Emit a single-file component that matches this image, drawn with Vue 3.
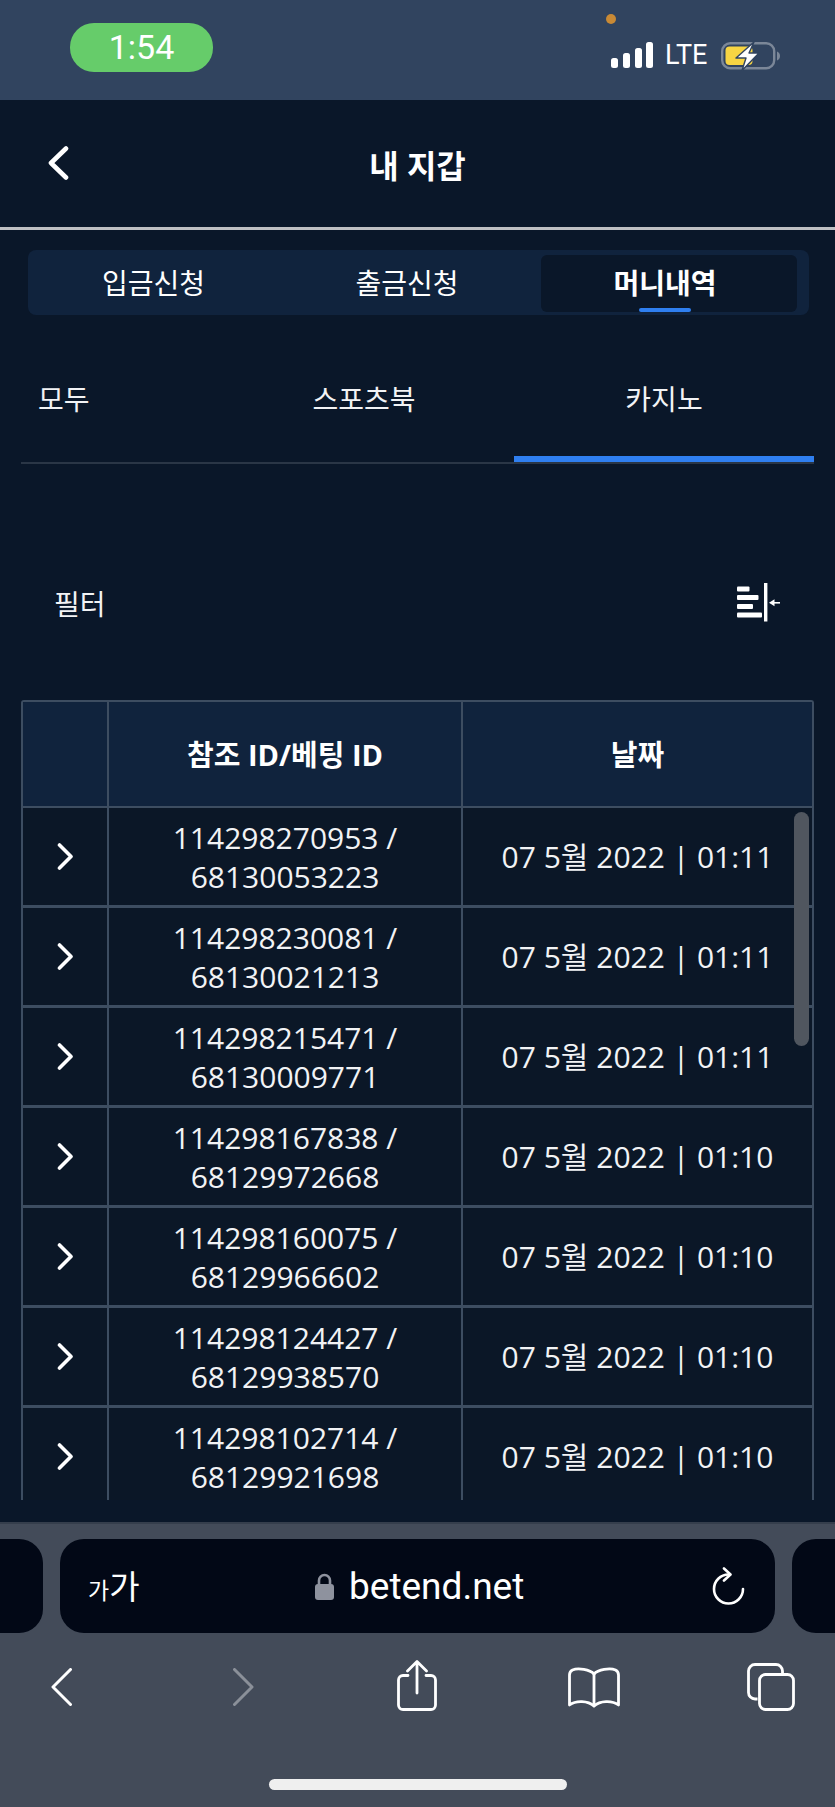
<template>
  <div class="phone">
    <!-- status bar -->
    <div class="status">
      <div class="time">1:54</div>
      <span class="cam-dot"></span>
      <div class="status-right">
        <svg class="signal" width="42" height="26" viewBox="0 0 42 26">
          <rect x="0" y="16" width="7" height="10" rx="2.5" />
          <rect x="12" y="11" width="7" height="15" rx="2.5" />
          <rect x="24" y="6" width="7" height="20" rx="2.5" />
          <rect x="35" y="0" width="7" height="26" rx="2.5" />
        </svg>
        <span class="lte">LTE</span>
        <svg class="battery" width="60" height="29" viewBox="0 0 60 29">
          <rect x="1.2" y="1.2" width="52" height="25" rx="8" fill="none" stroke="#7b8798" stroke-width="2.4" />
          <path d="M56 9.5c2 .6 3 2.3 3 4.5s-1 3.900-3 4.500z" fill="#7b8798" />
          <rect x="4.500" y="4.500" width="27" height="18.500" rx="4" fill="#f8d543" />
          <path d="M33 0 L15 16 H25 L21 28.500 L38 11 H28 Z" fill="#fff" stroke="#31445f" stroke-width="1.400" stroke-linejoin="round" />
        </svg>
      </div>
    </div>

    <!-- header -->
    <header class="head">
      <svg class="head-back" width="22" height="34" viewBox="0 0 22 34">
        <path d="M19 2.500 L4 17 L19 31.500" fill="none" stroke="#fff" stroke-width="4.600" stroke-linecap="round" stroke-linejoin="round" />
      </svg>
      <h1>내 지갑</h1>
    </header>

    <div class="main-tabs">
      <div v-for="t in mainTabs" :key="t.label" class="main-tab" :class="[t.cls, { active: t.active }]">
        {{ t.label }}
      </div>
    </div>

    <div class="sub-tabs">
      <div class="sub-tab first">모두</div>
      <div class="sub-tab">스포츠북</div>
      <div class="sub-tab active">카지노</div>
    </div>

    <div class="filter">
      <span>필터</span>
      <svg width="43" height="39" viewBox="0 0 43 39" fill="#fff">
        <rect x="0" y="3.500" width="12.500" height="5" rx="1" />
        <rect x="0" y="12" width="21.500" height="5" rx="1" />
        <rect x="0" y="21" width="16" height="5" rx="1" />
        <rect x="0" y="29.500" width="25" height="5" rx="1" />
        <rect x="27" y="0" width="3.400" height="38.500" />
        <rect x="36" y="19" width="7" height="1.600" />
        <path d="M32 19.800 L37.500 16.300 V23.300 Z" />
      </svg>
    </div>

    <!-- table -->
    <div class="table-wrap">
      <div class="row head-row">
        <div class="cell"></div>
        <div class="cell">참조 ID/베팅 ID</div>
        <div class="cell">날짜</div>
      </div>
      <div v-for="r in rows" :key="r.ref" class="row">
        <div class="cell">
          <svg width="17" height="27" viewBox="0 0 17 27">
            <path d="M2.500 2 L14 13.500 L2.500 25" fill="none" stroke="#fff" stroke-width="3.600" stroke-linecap="round" stroke-linejoin="round" />
          </svg>
        </div>
        <div class="cell">{{ r.ref }} /<br />{{ r.bet }}</div>
        <div class="cell">07 5월 2022 | {{ r.time }}</div>
      </div>
      <div class="scrollbar"></div>
    </div>

    <!-- safari toolbar -->
    <div class="browser">
      <div class="url-row">
        <div class="stub left"></div>
        <div class="url">
          <span class="aa"><small>가</small>가</span>
          <svg class="lock" width="19" height="27" viewBox="0 0 19 27">
            <path d="M4 13V7.500a5.500 5.500 0 0 1 11 0V13" fill="none" stroke="#8e929e" stroke-width="2.600" />
            <rect x="0" y="11" width="19" height="16" rx="3" fill="#8e929e" />
          </svg>
          <span class="host">betend.net</span>
          <svg class="reload" width="33" height="38" viewBox="0 0 33 38">
            <path d="M16.500 7.500 A14.500 14.500 0 1 0 31 22" fill="none" stroke="#fff" stroke-width="2.600" stroke-linecap="round" />
            <path d="M12 1.500 L18.500 7.500 L12 13.500" fill="none" stroke="#fff" stroke-width="2.600" stroke-linecap="round" stroke-linejoin="round" />
          </svg>
        </div>
        <div class="stub right"></div>
      </div>
      <div class="tools">
        <svg class="t-back" width="21" height="38" viewBox="0 0 21 38">
          <path d="M19.500 1.500 L2 19 L19.500 36.500" fill="none" stroke="#fff" stroke-width="3" stroke-linecap="round" stroke-linejoin="round" />
        </svg>
        <svg class="t-fwd" width="21" height="38" viewBox="0 0 21 38">
          <path d="M1.500 1.500 L19 19 L1.500 36.500" fill="none" stroke="#8b9099" stroke-width="3" stroke-linecap="round" stroke-linejoin="round" />
        </svg>
        <svg class="t-share" width="40" height="51" viewBox="0 0 40 51" fill="none" stroke="#fff" stroke-width="2.800" stroke-linecap="round" stroke-linejoin="round">
          <path d="M11 15.500H6a4.500 4.500 0 0 0-4.500 4.500v25A4.500 4.500 0 0 0 6 49.500h28a4.500 4.500 0 0 0 4.500-4.500V20a4.500 4.500 0 0 0-4.500-4.500h-5" />
          <path d="M20 33V2M10.500 11 20 1.500 29.500 11" />
        </svg>
        <svg class="t-book" width="52" height="41" viewBox="0 0 52 41" fill="none" stroke="#fff" stroke-width="2.800" stroke-linecap="round" stroke-linejoin="round">
          <path d="M26 7C22 2.500 10 .5 4.500 3 2.500 4 1.500 5.500 1.500 8v30C8 33 20 33.500 26 39c6-5.500 18-6 24.500-1V8c0-2.500-1-4-3-5C42 .5 30 2.500 26 7Z" />
          <path d="M26 7v32" />
        </svg>
        <svg class="t-tabs" width="48" height="48" viewBox="0 0 48 48" fill="none" stroke="#fff" stroke-width="2.800" stroke-linejoin="round">
          <path d="M10.500 36H8a6.500 6.500 0 0 1-6.500-6.500V8A6.500 6.500 0 0 1 8 1.500h21A6.500 6.500 0 0 1 35.500 8v3" />
          <rect x="12.500" y="11.500" width="34" height="35" rx="6" />
        </svg>
      </div>
      <div class="home-bar"></div>
    </div>
  </div>
</template>

<script setup>
const mainTabs = [
  { label: "입금신청", cls: "a" },
  { label: "출금신청", cls: "b" },
  { label: "머니내역", cls: "c", active: true }
];

const rows = [
  { ref: "114298270953", bet: "68130053223", time: "01:11" },
  { ref: "114298230081", bet: "68130021213", time: "01:11" },
  { ref: "114298215471", bet: "68130009771", time: "01:11" },
  { ref: "114298167838", bet: "68129972668", time: "01:10" },
  { ref: "114298160075", bet: "68129966602", time: "01:10" },
  { ref: "114298124427", bet: "68129938570", time: "01:10" },
  { ref: "114298102714", bet: "68129921698", time: "01:10" }
];
</script>

<style scoped>
.phone {
  width: 835px;
  height: 1807px;
  overflow: hidden;
  background: #0a1729;
  color: #fff;
  font-family: "Open Sans", "Noto Sans CJK KR", sans-serif;
}
.status {
  position: relative;
  height: 100px;
  background: #31445f;
  display: flex;
  justify-content: space-between;
  align-items: flex-start;
  padding: 0 54px 0 70px;
  box-sizing: border-box;
}
.time {
  margin-top: 23px;
  width: 143px;
  height: 49px;
  border-radius: 24px;
  background: #66cc6a;
  font-family: Roboto, sans-serif;
  font-size: 34px;
  line-height: 49px;
  text-align: center;
}
.cam-dot {
  position: absolute;
  left: 606px;
  top: 14px;
  width: 10px;
  height: 10px;
  border-radius: 50%;
  background: #c98a35;
}
.status-right {
  margin-top: 42px;
  display: flex;
  align-items: flex-start;
}
.signal {
  fill: #fff;
}
.lte {
  margin-left: 12px;
  width: 43px;
  font-family: Roboto, sans-serif;
  font-size: 27px;
  line-height: 27px;
}
.battery {
  margin-left: 13px;
}
.head {
  height: 127px;
  border-bottom: 3px solid #bfc0c3;
  display: flex;
  align-items: center;
  justify-content: center;
  position: relative;
}
.head h1 {
  margin: 0;
  font-size: 32px;
  font-weight: 700;
}
.head-back {
  position: absolute;
  left: 47px;
  top: 46px;
}
.main-tabs {
  margin: 20px 26px 0 28px;
  height: 65px;
  box-sizing: border-box;
  padding: 5px 12px 5px 0;
  border-radius: 8px;
  background: #10233d;
  display: grid;
  grid-template-columns: 251px 262px 256px;
}
.main-tab {
  font-size: 28px;
  line-height: 57px;
  text-align: center;
  position: relative;
}
.main-tab.b {
  padding-right: 6px;
}
.main-tab.c {
  padding-right: 8px;
}
.main-tab.active {
  background: #0a1729;
  border-radius: 6px;
  font-weight: 700;
}
.main-tab.active::after {
  content: "";
  position: absolute;
  left: 98px;
  bottom: 0;
  width: 52px;
  height: 4px;
  border-radius: 2px;
  background: #2f7ff0;
}
.sub-tabs {
  margin: 19px 21px 0;
  display: grid;
  grid-template-columns: 193px 300px 300px;
  border-bottom: 2px solid #2a3646;
}
.sub-tab {
  height: 128px;
  box-sizing: border-box;
  padding-top: 45px;
  font-size: 28px;
  line-height: 40px;
  text-align: center;
  color: #f2f3f5;
}
.sub-tab.first {
  padding-left: 17px;
  text-align: left;
}
.sub-tab.active {
  border-bottom: 6px solid #2f7ff0;
}
.filter {
  margin-top: 119px;
  height: 39px;
  padding: 0 55px 0 54px;
  display: flex;
  align-items: center;
  justify-content: space-between;
  font-size: 28px;
  color: #f2f3f5;
}
.table-wrap {
  position: relative;
  margin: 78px 21px 0;
  height: 800px;
  overflow: hidden;
  box-sizing: border-box;
  border: 2px solid #3d4d61;
  border-bottom: none;
  border-radius: 3px 3px 0 0;
  background: #0b1727;
}
.row {
  display: grid;
  grid-template-columns: 86px 354px 1fr;
  height: 100px;
  box-sizing: border-box;
  border-bottom: 3px solid #3d4d61;
}
.head-row {
  height: 106px;
  border-bottom-width: 2px;
  background: #10233d;
  font-weight: 700;
}
.cell {
  display: flex;
  align-items: center;
  justify-content: center;
  text-align: center;
  font-size: 30px;
  line-height: 39px;
  color: #f2f3f5;
  border-right: 2px solid #3d4d61;
}
.cell:last-child {
  border-right: none;
}
.head-row .cell {
  color: #fff;
  font-size: 29px;
}
.scrollbar {
  position: absolute;
  right: 3px;
  top: 110px;
  width: 15px;
  height: 234px;
  border-radius: 8px;
  background: #50565f;
}
.browser {
  margin-top: 22px;
  height: 285px;
  box-sizing: border-box;
  border-top: 2px solid #353e4c;
  background: #434b59;
  padding-top: 15px;
}
.url-row {
  display: flex;
  gap: 17px;
}
.stub {
  width: 43px;
  height: 94px;
  background: #020816;
}
.stub.left {
  border-radius: 0 24px 24px 0;
}
.stub.right {
  border-radius: 24px 0 0 24px;
}
.url {
  flex: 1;
  height: 94px;
  border-radius: 24px;
  background: #020816;
  display: flex;
  align-items: center;
  position: relative;
  padding-left: 28px;
}
.aa {
  font-size: 33px;
  width: 227px;
  line-height: 1;
}
.aa small {
  font-size: 23px;
}
.host {
  margin-left: 15px;
  font-family: Roboto, sans-serif;
  font-size: 37px;
  color: #fff;
}
.reload {
  position: absolute;
  right: 30px;
  top: 28px;
}
.tools {
  margin-top: 27px;
  height: 51px;
  display: flex;
  align-items: flex-start;
  padding-left: 51px;
}
.t-back {
  margin-top: 8px;
}
.t-fwd {
  margin-top: 8px;
  margin-left: 161px;
}
.t-share {
  margin-left: 143px;
}
.t-book {
  margin-left: 131px;
  margin-top: 7px;
}
.t-tabs {
  margin-left: 127px;
  margin-top: 3px;
}
.home-bar {
  margin: 68px 0 0 269px;
  width: 298px;
  height: 11px;
  border-radius: 6px;
  background: #efefef;
}
</style>

<style>
html,
body {
  margin: 0;
  background: #0a1729;
}
</style>
